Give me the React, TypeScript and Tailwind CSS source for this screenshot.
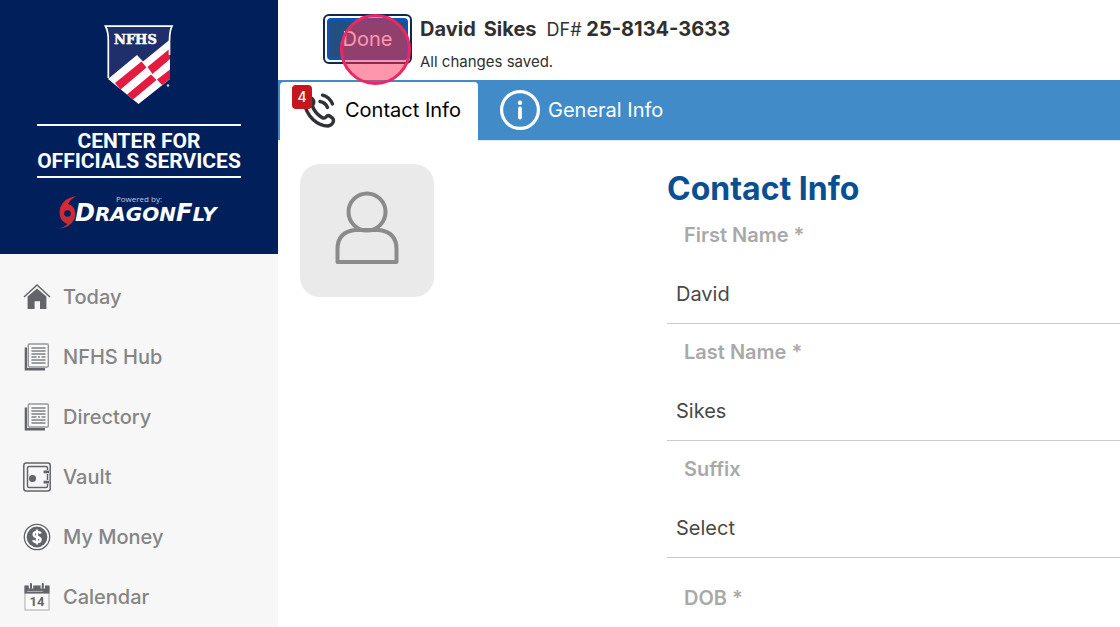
import type { ReactNode } from 'react';

interface NavItem {
  label: string;
  icon: ReactNode;
}

interface FieldProps {
  id: string;
  label: string;
  children: ReactNode;
  className?: string;
}

const HomeIcon = () => (
  <svg className="w-7 h-7" viewBox="0 0 28 28" fill="#636469">
    <path d="M14 5.4 23.4 13.6V26H17V18.2h-5.4V26H4.6V13.6z" />
    <path d="M1 14 14 2 27 14" fill="none" stroke="#636469" strokeWidth="1.5" />
  </svg>
);

const NewsIcon = () => (
  <svg className="w-7 h-7" viewBox="0 0 28 28" fill="none">
    <path d="M2.9 4.5V26.2H22" stroke="#636469" strokeWidth="2.4" />
    <rect x="5.3" y="1" width="20" height="23" rx="1" fill="#fafafa" stroke="#97989b" strokeWidth="1.4" />
    <path d="M8.5 5H22.500M8.5 8H22.500M8.5 11H22.500M8.5 17H22.500M8.5 20H22.500" stroke="#7f8083" strokeWidth="1.3" />
    <path d="M8.5 14H13.500M15 14H17M18.500 14H22.500" stroke="#7f8083" strokeWidth="1.3" />
  </svg>
);

const VaultIcon = () => (
  <svg className="w-7 h-[30px]" viewBox="0 0 28 30" fill="none" stroke="#636469">
    <rect x="0.8" y="1" width="26.4" height="28" rx="2.5" strokeWidth="1.5" />
    <path d="M24.5 8V6Q24.5 4.4 23 4.4H6Q4.5 4.4 4.5 6V24Q4.5 25.6 6 25.6H23Q24.5 25.6 24.5 24V22M24.5 12V18" strokeWidth="1.5" />
    <circle cx="9.5" cy="16.5" r="3.5" fill="#636469" stroke="none" />
    <path d="M20.6 9.8H26M20.6 20.2H26" strokeWidth="2.8" />
  </svg>
);

const MoneyIcon = () => (
  <svg className="w-7 h-7" viewBox="0 0 28 28">
    <circle cx="14" cy="14" r="12.7" fill="#fff" stroke="#636469" strokeWidth="1.3" />
    <circle cx="14" cy="14" r="10.4" fill="#636469" />
    <path d="M17.8 10.6Q17 8.9 14 8.9 10.6 8.9 10.6 11.4 10.6 13.4 14 14 17.6 14.7 17.6 16.8 17.6 19.2 14 19.2 10.8 19.2 10.2 17.2M14 6.4V21.6" fill="none" stroke="#fff" strokeWidth="2.3" />
  </svg>
);

const CalendarIcon = () => (
  <svg className="w-7 h-7" viewBox="0 0 28 28">
    <rect x="2" y="3" width="24" height="24" fill="#fbfbfb" stroke="#a9a9ab" strokeWidth="1" />
    <path d="M1.500 2.600H26.500V10.600H1.500z" fill="#636469" />
    <path d="M8 .6V5.4M19.800 .6V5.4" stroke="#f7f7f7" strokeWidth="4.400" />
    <path d="M8 1V5M19.800 1V5" stroke="#636469" strokeWidth="2" strokeLinecap="round" />
    <path d="M4 8.400H20" stroke="#c6c6c8" strokeWidth="0.8" />
    <text x="14" y="23" textAnchor="middle" className="font-['Roboto',sans-serif] text-[13px] font-bold" fill="#636469">14</text>
  </svg>
);

const PhoneIcon = () => (
  <svg className="w-9 h-9" viewBox="0 0 36 36" fill="none" stroke="#303236" strokeWidth="3.400" strokeLinecap="round" strokeLinejoin="round">
    <path d="M8 5Q4 6 3.500 11 4.500 20 12 27.500 19 34 27 34 32 33 32.500 28.500 32.500 26.500 30 25 27.500 22.500 25.500 24.500 23.500 27 21 25.500 14.500 21.500 12 15.500 11 13 12.500 11.500 13.500 9 11 6.500z" />
    <path d="M19 9.500Q24.500 10.500 26.500 15.500" />
    <path d="M21.500 3.200Q28.500 5 31.500 12" />
  </svg>
);

const InfoIcon = () => (
  <svg className="w-10 h-10" viewBox="0 0 40 40" fill="none" stroke="#fff">
    <circle cx="20" cy="20" r="18.400" strokeWidth="3.200" />
    <path d="M20 18.500V27.500" strokeWidth="3.800" strokeLinecap="round" />
    <circle cx="20" cy="12.700" r="2.200" fill="#fff" stroke="none" />
  </svg>
);

const ShieldLogo = () => (
  <svg className="w-[70px] h-20" viewBox="0 0 70 80" role="img" aria-label="NFHS">
    <path d="M1 1H68.500Q66 6 66 16V54L34.500 79 4 54V16Q4 6 1 1z" fill="#1f2f6b" />
    <path d="M4 54 33 30 39 36.500 66 14.500V54L34.500 79z" fill="#fff" />
    <path d="M11 58 37.500 36.500 42.500 42.500 16.500 64.500zM23 69.500 47 49.500 52.500 55 29 74.500zM43.500 42 66 23.500V34L48.500 49zM53 54.500 66 44.500V54L58 60z" fill="#e31b3f" />
    <path d="M4.300 53V16Q4.300 6 1.500 1.200H68Q65.500 6 65.500 16V30" fill="none" stroke="#fff" strokeWidth="1.700" />
    <text x="10" y="19" className="font-['DejaVu_Serif',serif] text-[13px] font-bold" fill="#fff" stroke="#fff" strokeWidth="0.500">NFHS</text>
    <circle cx="64" cy="60.500" r="1.300" fill="#c6cce0" />
  </svg>
);

const DragonFlyLogo = () => (
  <svg className="w-[162px] h-9" viewBox="0 0 162 36" role="img" aria-label="DragonFly">
    <defs>
      <linearGradient id="flame" x1="0" y1="0" x2="0" y2="1">
        <stop offset="0" stopColor="#e8262c" />
        <stop offset="1" stopColor="#b3303c" />
      </linearGradient>
    </defs>
    <path d="M18.500 1Q6 3 2.500 12 0 20 4 25.500 7 28.500 9.500 29 6 32.500 1 33.500 12 33 16.500 24 18.500 17 15.500 12.500 13.500 9.500 10 9 12.500 4 18.500 1z" fill="url(#flame)" />
    <circle cx="9.500" cy="18.500" r="3.300" fill="#001f5b" />
    <text x="17" y="26" className="font-['DejaVu_Sans',sans-serif] font-bold italic" fill="#fff">
      <tspan className="text-[24px]">D</tspan>
      <tspan className="text-[20px]">RAGON</tspan>
      <tspan className="text-[24px]">F</tspan>
      <tspan className="text-[20px]">LY</tspan>
    </text>
  </svg>
);

const navItems: NavItem[] = [
  { label: 'Today', icon: <HomeIcon /> },
  { label: 'NFHS Hub', icon: <NewsIcon /> },
  { label: 'Directory', icon: <NewsIcon /> },
  { label: 'Vault', icon: <VaultIcon /> },
  { label: 'My Money', icon: <MoneyIcon /> },
  { label: 'Calendar', icon: <CalendarIcon /> },
];

const Sidebar = () => (
  <aside className="w-[278px] shrink-0 bg-[#f7f7f7]">
    <div className="bg-[#001f5b] text-white flex flex-col items-center pt-[25px] pb-[23px]">
      <ShieldLogo />
      <div className="mt-[19px] py-[5px] border-y-2 border-white font-['Roboto',sans-serif] text-[21px] leading-5 font-bold text-center whitespace-nowrap">
        CENTER FOR
        <br />
        OFFICIALS SERVICES
      </div>
      <p className="mt-[15px] font-['Open_Sans',sans-serif] text-[8px] leading-3 text-[#c3cbdf]">Powered by:</p>
      <div className="-mt-2.5">
        <DragonFlyLogo />
      </div>
    </div>

    <nav className="pt-[13px]">
      {navItems.map(item => (
        <a key={item.label} href="#" className="flex items-center gap-3 h-[60px] pl-[23px] text-xl font-medium text-[#858585]">
          {item.icon}
          <span>{item.label}</span>
        </a>
      ))}
    </nav>
  </aside>
);

const Header = () => (
  <header className="flex items-start gap-2 h-20 pl-[45px] pt-3.5">
    <div className="relative">
      <button className="block w-[89px] h-[50px] rounded-md border-2 border-[#14284a] p-0.5 text-xl text-white">
        <span className="flex items-center justify-center h-full rounded-sm border-3 border-[#0b55b5] bg-[#235080]">Done</span>
      </button>
      {/* click marker */}
      <span className="absolute z-10 left-[17px] top-0 w-[71px] h-[71px] rounded-full border-3 border-[#ed2861] bg-[#ff2d5a]/50" />
    </div>
    <div className="pt-px text-[#303030]">
      <h1 className="flex items-baseline gap-2 text-xl leading-7 font-bold">
        <span>David</span>
        <span>Sikes</span>
        <span className="pl-0.5"><span className="text-lg font-normal">DF#</span> 25-8134-3633</span>
      </h1>
      <p className="mt-1.5 text-[15px] leading-6">All changes saved.</p>
    </div>
  </header>
);

const Tabs = () => (
  <div role="tablist" className="flex h-[61px] bg-[#428bc9] border-b border-[#dcebf5] pl-0.5 text-xl">
    <button role="tab" aria-selected="true" className="relative -mb-px mt-0.5 w-[198px] rounded-t bg-white flex items-center gap-2 pl-[21px] pb-1 text-black whitespace-nowrap">
      <PhoneIcon />
      <span>Contact Info</span>
      <span className="absolute left-3 top-[3px] w-5 h-6 rounded bg-[#c5161d] flex items-center justify-center text-sm text-white font-medium">4</span>
    </button>
    <button role="tab" aria-selected="false" className="flex items-center gap-2 pl-[22px] text-white whitespace-nowrap">
      <InfoIcon />
      <span>General Info</span>
    </button>
  </div>
);

const Field = ({ id, label, children, className }: FieldProps) => (
  <div className={className}>
    <label htmlFor={id} className="block h-[52px] pt-[14px] pl-[17px] text-xl leading-7 font-semibold text-[#a9a9a9]">
      {label}
    </label>
    {children}
  </div>
);

const inputClass =
  'block w-full h-[65px] px-[9px] pt-1.5 appearance-none border-b border-[#cbcbcb] bg-transparent text-xl text-[#484848] outline-none';

const ContactForm = () => (
  <form className="flex-1 min-w-0 pt-[7px]">
    <h2 className="text-[32px] leading-9 font-bold text-[#0b4f93]">Contact Info</h2>
    <Field id="first-name" label="First Name *">
      <input id="first-name" type="text" defaultValue="David" className={inputClass} />
    </Field>
    <Field id="last-name" label="Last Name *">
      <input id="last-name" type="text" defaultValue="Sikes" className={inputClass} />
    </Field>
    <Field id="suffix" label="Suffix">
      <select id="suffix" className={inputClass}>
        <option>Select</option>
      </select>
    </Field>
    <Field id="dob" label="DOB *" className="pt-3">
      <input id="dob" type="text" className={inputClass} />
    </Field>
  </form>
);

const App = () => {
  return (
    <div className="flex h-screen overflow-hidden bg-white font-['Inter',sans-serif]">
      <Sidebar />
      <main className="flex-1 min-w-0">
        <Header />
        <Tabs />
        <div className="flex pl-[22px] pt-[23px]">
          <div className="w-[367px] shrink-0">
            <div className="w-[134px] h-[133px] rounded-[20px] bg-[#eaeaea] flex items-center justify-center pb-1.5">
              <svg className="w-16 h-[74px]" viewBox="0 0 64 74" fill="none" stroke="#8b8b8b" strokeWidth="4">
                <circle cx="32" cy="21" r="18.500" />
                <path d="M20 39H44Q61.500 41 61.500 58V71H2.500V58Q2.500 41 20 39z" strokeLinejoin="round" />
              </svg>
            </div>
          </div>
          <ContactForm />
        </div>
      </main>
    </div>
  );
};

export default App;
